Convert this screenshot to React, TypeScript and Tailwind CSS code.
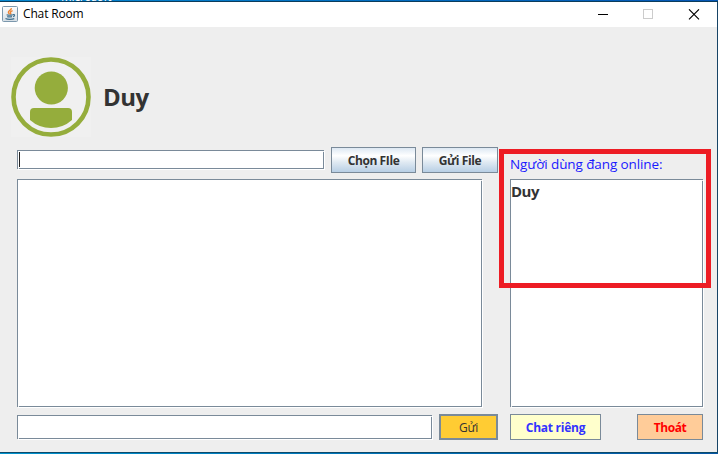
import React from "react";

const inset =
  "relative border border-[#7a8a99] bg-white shadow-[1px_1px_0_#ffffff] before:absolute before:-right-px before:top-0 before:size-px before:bg-[#eeeeee] after:absolute after:-bottom-px after:left-0 after:size-px after:bg-[#eeeeee]";

function JavaIcon() {
  return (
    <svg width="16" height="16" viewBox="0 0 16 16" fill="none">
      <defs>
        <linearGradient id="tile" x1="0" y1="0" x2="0" y2="1">
          <stop offset="0" stopColor="#fdfdfd" />
          <stop offset="1" stopColor="#d5dde4" />
        </linearGradient>
      </defs>
      <rect x="0.5" y="0.5" width="15" height="15" rx="1" fill="url(#tile)" stroke="#7c98ad" />
      <path d="M9.3 2.2C9.8 4.3 5.8 4.6 6.4 6.5c.2.7.9 1.1 1.1 1.9M10.6 4.6C8.6 5.4 8 6.1 8.6 7.1c.3.5.2.9-.2 1.3" stroke="#ee8434" strokeWidth="1.4" />
      <path d="M4.6 8.8c1.5.5 4.3.5 6 0M5.2 10.6c1.4.4 3.4.4 4.8 0M3.5 12.5c2 1.1 6.5 1.1 8.8.1M10.8 8.6c2.3-.5 2.2 1.5.3 2" stroke="#41718f" strokeWidth="1.2" />
    </svg>
  );
}

function TitleBar() {
  return (
    <header className="flex h-[25px] shrink-0 items-start bg-white pl-[2px]">
      <div className="mt-[4px] h-4 w-4">
        <JavaIcon />
      </div>
      <span className="ml-[5px] mt-[4px] text-[12px] leading-4 tracking-[-0.15px] text-black">Chat Room</span>
      <svg className="ml-auto mr-[17px] mt-[7px]" width="102" height="11" fill="none" shapeRendering="crispEdges">
        <path d="M0 5.5h10" stroke="#000" />
        <rect x="45.5" y="0.5" width="9" height="9" stroke="#ccc" />
        <path d="M91 0.3l10 10M101 0.3l-10 10" stroke="#000" shapeRendering="auto" strokeWidth="1.1" />
      </svg>
    </header>
  );
}

function Avatar() {
  return (
    <svg className="bg-[#f0f0f0]" width="80" height="80" viewBox="0 0 80 80">
      <circle cx="40" cy="40" r="37.5" fill="none" stroke="#95ad3c" strokeWidth="4.6" />
      <circle cx="40.3" cy="31" r="16.6" fill="#95ad3c" />
      <path d="M23 51h34q4 0 4 4v8q-9 8-21 8t-21-8v-8q0-4 4-4z" fill="#95ad3c" />
    </svg>
  );
}

function FileButton({ className, children }: { className: string; children: React.ReactNode }) {
  return (
    <button
      className={`h-[26px] border border-[#7a8a99] bg-[linear-gradient(180deg,#dde8f3_0%,#ffffff_32%,#dfe9f2_60%,#b8cfe5_100%)] pt-px text-[12px] leading-4 font-bold text-[#333] ${className}`}
    >
      {children}
    </button>
  );
}

export default function App() {
  return (
    <div className="flex h-[454px] w-[718px] flex-col overflow-hidden bg-[#eeeeee] font-['Open_Sans','Noto_Sans',sans-serif]">
      <div className="h-[2px] shrink-0 overflow-hidden border-b border-[#0b3c5c] bg-linear-to-r from-[#0788d0] to-[#0556b4] pl-[61px]">
        <span className="block -mt-[11px] text-[12px] leading-4 tracking-[-0.3px] text-white">Microsoft</span>
      </div>
      <div className="flex min-h-0 flex-1 flex-col border-r border-[#174466]">
        <TitleBar />
        <section className="flex h-[120px] shrink-0 items-start pl-[11px] pt-[30px]">
          <Avatar />
          <h1 className="ml-[12px] mt-[24px] text-[24px] leading-8 font-bold tracking-[-0.5px] text-[#333]">Duy</h1>
        </section>
        <main className="flex gap-[12px] pl-[17px]">
          <div className="w-[481px]">
            <div className="flex">
              <div className={`mt-[3px] h-[19px] w-[307px] p-px ${inset}`}>
                <div className="h-full w-px bg-[#222]" />
              </div>
              <FileButton className="ml-[7px] w-[85px] tracking-[-0.4px]">Chọn FIle</FileButton>
              <FileButton className="ml-[6px] w-[76px] tracking-[-0.4px]">Gửi File</FileButton>
            </div>
            <div className={`mt-[6px] h-[228px] w-[465px] ${inset}`} />
            <div className="mt-[7px] flex">
              <div className={`mt-px h-[24px] w-[415px] ${inset}`} />
              <button className="ml-[7px] h-[26px] w-[59px] border-2 border-[#7a8a99] bg-[#ffcc33] pt-px text-[12px] leading-4 tracking-[-0.2px] text-[#333]">Gửi</button>
            </div>
          </div>
          <div className="relative w-[193px]">
            <p className="h-[32px] whitespace-nowrap pt-[8px] text-[13.5px] leading-[18px] tracking-[-0.1px] text-[#1a1aff]">Người dùng đang online:</p>
            <div className={`h-[228px] pt-[1px] text-[15px] leading-5 font-bold tracking-[-0.5px] text-[#333] ${inset}`}>Duy</div>
            <div className="mt-[7px] flex justify-between">
              <button className="h-[26px] w-[91px] border border-[#7a8a99] bg-[#ffffcc] pt-px text-[12px] leading-4 font-bold tracking-[-0.25px] text-[#3333ff]">Chat riêng</button>
              <button className="h-[26px] w-[66px] border border-[#7a8a99] bg-[#ffcc99] pt-px text-[12px] leading-4 font-bold tracking-[-0.4px] text-[#ff0000]">Thoát</button>
            </div>
            <div className="pointer-events-none absolute -left-[11px] top-[2px] h-[139px] w-[212px] border-5 border-[#ed1c24]" />
          </div>
        </main>
      </div>
      <div className="h-[2px] shrink-0 border-t border-[#0b4a6b] bg-linear-to-r from-[#0092cc] to-[#0556a4]" />
    </div>
  );
}
